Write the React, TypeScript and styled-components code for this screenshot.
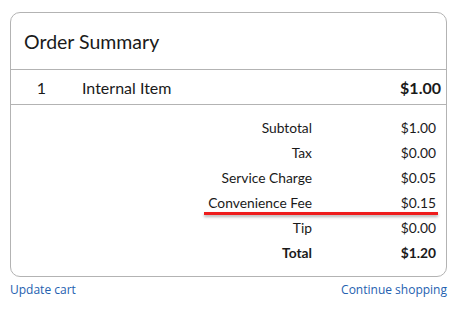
import React from "react";
import styled, { createGlobalStyle } from "styled-components";

const Global = createGlobalStyle`
  body { margin: 0; background: #fff; }
  * { box-sizing: border-box; }
`;

const Page = styled.div`
  padding: 12px 21px 0 10px;
  font-family: "Lato", "Noto Sans", sans-serif;
  color: #1a1a1a;
`;

const Card = styled.div`
  border: 1px solid #b3b3b3;
  border-radius: 10px;
`;

const Header = styled.div`
  height: 57px;
  display: flex;
  align-items: center;
  padding-left: 13px;
  font-size: 19.5px;
  border-bottom: 1px solid #b3b3b3;
`;

const ItemRow = styled.div`
  height: 35px;
  display: grid;
  grid-template-columns: 61px 1fr auto;
  column-gap: 10px;
  align-items: center;
  padding-right: 5px;
  border-bottom: 1px solid #b3b3b3;
  font-size: 16px;
`;

const Qty = styled.span`
  text-align: center;
`;

const Price = styled.span`
  font-weight: 700;
`;

const Summary = styled.div`
  padding: 10px 10px 11px 0;
`;

const Row = styled.div<{ $bold?: boolean; $mark?: boolean }>`
  position: relative;
  height: 25px;
  display: grid;
  grid-template-columns: 1fr 124px;
  align-items: center;
  font-size: 13.8px;
  font-weight: ${(p) => (p.$bold ? 700 : 400)};
  text-align: right;
  &::after {
    content: "";
    display: ${(p) => (p.$mark ? "block" : "none")};
    position: absolute;
    left: 193px;
    right: -2px;
    bottom: 0px;
    height: 3px;
    background: #ee1c1c;
    box-shadow: 0 2px 3px rgba(0, 0, 0, 0.3);
  }
`;

const Links = styled.div`
  display: flex;
  justify-content: space-between;
  margin-top: 4px;
  font-family: "Open Sans", sans-serif;
  font-size: 12px;
`;

const Link = styled.a`
  color: #2461b0;
  text-decoration: none;
`;

const rows = [
  { label: "Subtotal", value: "$1.00" },
  { label: "Tax", value: "$0.00" },
  { label: "Service Charge", value: "$0.05" },
  { label: "Convenience Fee", value: "$0.15", mark: true },
  { label: "Tip", value: "$0.00" },
  { label: "Total", value: "$1.20", bold: true },
];

export default function App() {
  return (
    <Page>
      <Global />
      <Card>
        <Header>Order Summary</Header>
        <ItemRow>
          <Qty>1</Qty>
          <span>Internal Item</span>
          <Price>$1.00</Price>
        </ItemRow>
        <Summary>
          {rows.map((r) => (
            <Row key={r.label} $bold={r.bold} $mark={r.mark}>
              <span>{r.label}</span>
              <span>{r.value}</span>
            </Row>
          ))}
        </Summary>
      </Card>
      <Links>
        <Link href="#">Update cart</Link>
        <Link href="#">Continue shopping</Link>
      </Links>
    </Page>
  );
}
